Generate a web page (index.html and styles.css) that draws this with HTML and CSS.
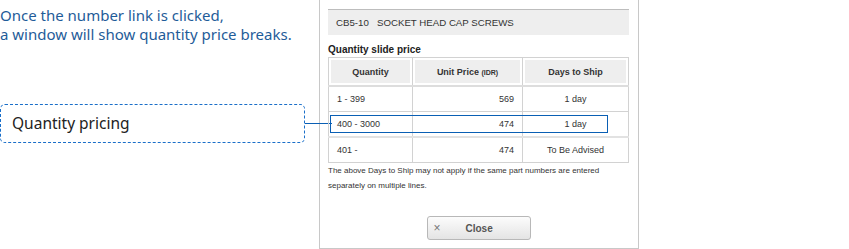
FILE: index.html
```html
<!DOCTYPE html>
<html lang="en">
<head>
    <meta charset="UTF-8">
    <title>Quantity price breaks</title>
    <link rel="stylesheet" href="styles.css">
</head>
<body>
    <div class="guide">
        <div class="notes">
            <p class="lead">Once the number link is clicked,<br>a window will show quantity price breaks.</p>
            <div class="callout">Quantity pricing</div>
        </div>
        <div class="dialog">
            <div class="dialog-title">CB5-10&nbsp;&nbsp;&nbsp;SOCKET HEAD CAP SCREWS</div>
            <h2 class="slide-title">Quantity slide price</h2>
            <div class="price-wrap">
                <table class="price-table">
                    <tr>
                        <th class="col-qty">Quantity</th>
                        <th class="col-price">Unit Price <small>(IDR)</small></th>
                        <th>Days to Ship</th>
                    </tr>
                    <tr>
                        <td>1 - 399</td>
                        <td class="num">569</td>
                        <td class="days">1 day</td>
                    </tr>
                    <tr class="picked">
                        <td>400 - 3000</td>
                        <td class="num">474</td>
                        <td class="days">1 day</td>
                    </tr>
                    <tr>
                        <td>401 -</td>
                        <td class="num">474</td>
                        <td class="days">To Be Advised</td>
                    </tr>
                </table>
                <div class="row-mark"></div>
            </div>
            <p class="ship-note">The above Days to Ship may not apply if the same part numbers are entered separately on multiple lines.</p>
            <div class="dialog-foot">
                <button class="close-btn"><span class="x">&times;</span><span>Close</span></button>
            </div>
        </div>
    </div>
</body>
</html>
```

FILE: styles.css
```css
body {
    margin: 0;
    background: #fff;
    font-family: "Liberation Sans", Arial, sans-serif;
}
.guide {
    display: flex;
    height: 249px;
}
.notes {
    width: 319px;
    flex: none;
}
.lead {
    margin: 6px 0 0;
    font-family: "Noto Sans", sans-serif;
    font-size: 15px;
    line-height: 19px;
    color: #1f5c99;
}
.callout {
    position: relative;
    box-sizing: border-box;
    width: 305px;
    height: 39px;
    margin-top: 60px;
    padding-left: 11px;
    border: 1px dashed #1a6fc9;
    border-radius: 5px;
    font-family: "Noto Sans", sans-serif;
    font-size: 15.5px;
    line-height: 37px;
    color: #222;
}
/* line from the callout to the marked row */
.callout::after {
    content: "";
    position: absolute;
    left: 304px;
    top: 18px;
    width: 27px;
    height: 1px;
    background: #0a5fb4;
}
.dialog {
    box-sizing: border-box;
    width: 320px;
    height: 249px;
    padding: 9px 9px 0 8px;
    border: 1px solid #c8c8c8;
    border-top: none;
    display: flex;
    flex-direction: column;
}
.dialog-title {
    height: 25px;
    padding-left: 8px;
    border-top: 1px solid #bdbdbd;
    background: #eee;
    font-size: 9.7px;
    line-height: 25px;
    color: #333;
}
.slide-title {
    margin: 9px 0 1px;
    font-size: 10px;
    line-height: 12px;
    color: #222;
}
.price-wrap {
    position: relative;
}
.price-table {
    width: 100%;
    border-collapse: collapse;
    font-size: 9px;
    color: #333;
}
.price-table th,
.price-table td {
    border: 1px solid #d2d2d2;
    padding: 0 8px;
}
.price-table th {
    height: 27px;
    background: #eee;
    box-shadow: inset 0 0 0 2px #fff;
    font-weight: bold;
    border-bottom: 2px solid #ddd;
}
.price-table th small {
    font-size: 7px;
}
.price-table td {
    height: 24px;
}
.col-qty {
    width: 67px;
}
.col-price {
    width: 93px;
}
.num {
    text-align: right;
}
.days {
    text-align: center;
}
.picked td {
    border-bottom: 2px solid #e2e2e2;
}
.row-mark {
    position: absolute;
    left: 2px;
    top: 58px;
    width: 278px;
    height: 18px;
    box-sizing: border-box;
    border: 1.5px solid #0a5fb4;
}
.ship-note {
    margin: 0;
    padding-right: 20px;
    font-size: 8px;
    line-height: 15px;
    color: #333;
}
.dialog-foot {
    margin-top: 23px;
    display: flex;
    justify-content: center;
}
.close-btn {
    box-sizing: border-box;
    width: 104px;
    height: 24px;
    display: flex;
    align-items: center;
    padding: 0 0 0 6px;
    border: 1px solid #b8b8b8;
    border-radius: 3px;
    background: linear-gradient(#fcfcfc, #e4e4e4);
    font-family: "Liberation Sans", Arial, sans-serif;
    font-size: 10px;
    font-weight: bold;
    color: #555;
}
.close-btn .x {
    font-weight: normal;
    font-size: 12px;
    color: #777;
    margin-right: 25px;
}
```
